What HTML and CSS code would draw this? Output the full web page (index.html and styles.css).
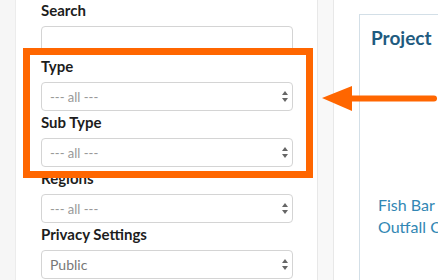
FILE: index.html
```html
<!DOCTYPE html>
<html lang="en">
<head>
  <meta charset="UTF-8">
  <title>Project Filters</title>
  <link rel="stylesheet" href="styles.css">
</head>
<body>

  <aside class="sidebar">
    <div class="field">
      <div class="select"></div>
    </div>
    <div class="field">
      <label>Search</label>
      <div class="select"></div>
    </div>
    <div class="field">
      <label>Type</label>
      <div class="select muted">--- all ---
        <svg class="updown" viewBox="0 0 6 11"><path d="M3 0L6 4H0Z M3 11L6 7H0Z"/></svg>
      </div>
    </div>
    <div class="field">
      <label>Sub Type</label>
      <div class="select muted">--- all ---
        <svg class="updown" viewBox="0 0 6 11"><path d="M3 0L6 4H0Z M3 11L6 7H0Z"/></svg>
      </div>
    </div>
    <div class="field">
      <label>Regions</label>
      <div class="select muted">--- all ---
        <svg class="updown" viewBox="0 0 6 11"><path d="M3 0L6 4H0Z M3 11L6 7H0Z"/></svg>
      </div>
    </div>
    <div class="field">
      <label>Privacy Settings</label>
      <div class="select">Public
        <svg class="updown" viewBox="0 0 6 11"><path d="M3 0L6 4H0Z M3 11L6 7H0Z"/></svg>
      </div>
    </div>
  </aside>

  <div class="gutter"></div>

  <main>
    <section class="card">
      <h2>Project</h2>
      <p class="links">Fish Bar Creek<br>Outfall Culvert</p>
    </section>
  </main>

  <!-- callout overlay -->
  <div class="highlight"></div>
  <svg class="arrow" viewBox="0 0 116 26">
    <path d="M0 12L30 0V25Z" fill="#ff6600"/>
    <line x1="29" y1="12.5" x2="112" y2="12.5" stroke="#ff6600" stroke-width="6" stroke-linecap="round"/>
  </svg>

</body>
</html>
```

FILE: styles.css
```css
* { box-sizing: border-box; }
body {
  margin: 0;
  height: 280px;
  overflow: hidden;
  display: flex;
  align-items: flex-start;
  background: #f6f6f6;
  font-family: Lato, "Open Sans", sans-serif;
  color: #222;
}
.sidebar {
  flex: 0 0 303px;
  margin-left: 15px;
  margin-top: -30px;
  padding: 0 24px 20px 25px;
  background: #fff;
  border-left: 1px solid #ececec;
  border-right: 1px solid #e8e8e8;
  min-height: 340px;
}
.field label {
  display: block;
  font-size: 15px;
  font-weight: bold;
  line-height: 22px;
  margin-bottom: 5px;
  color: #1d1d1d;
}
.select {
  height: 29px;
  border: 1px solid #d4d4d4;
  border-radius: 4px;
  background: #fff;
  display: flex;
  align-items: center;
  justify-content: space-between;
  padding: 0 4px 0 8px;
  font-size: 14px;
  color: #777;
}
.select.muted { font-size: 13px; color: #999; }
.updown { width: 6px; height: 11px; fill: #666; }
.gutter {
  flex: 0 0 16px;
  height: 280px;
  background: #f8f8f8;
  border-right: 1px solid #e8e8e8;
}
main {
  flex: 1;
  height: 280px;
  background: #fff;
  padding: 14px 0 0 25px;
}
.card {
  width: 300px;
  height: 300px;
  border: 1px solid #d3dfe7;
  border-right: none;
  padding: 10px 0 0 11px;
}
.card h2 {
  margin: 0;
  font-size: 19px;
  line-height: 26px;
  color: #1f5b80;
}
.links {
  margin: 143px 0 0 7px;
  font-size: 16px;
  line-height: 22px;
  color: #3287b4;
}
.highlight {
  position: absolute;
  left: 23px;
  top: 48px;
  width: 290px;
  height: 130px;
  border: 7px solid #ff6600;
}
.arrow {
  position: absolute;
  left: 322px;
  top: 86px;
  width: 116px;
  height: 26px;
}
```
